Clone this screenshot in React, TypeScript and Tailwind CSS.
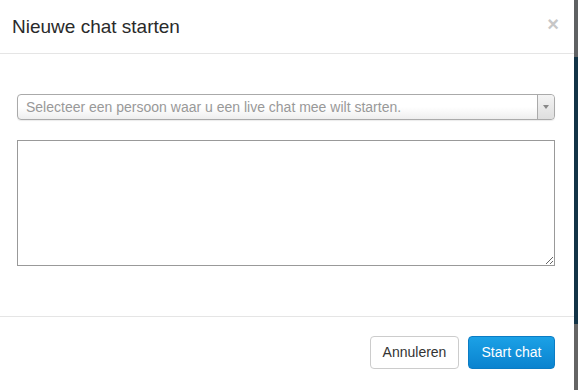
import React from "react";

export default function App() {
  return (
    <div
      className="w-[578px] h-[390px] flex bg-white overflow-hidden"
      style={{ fontFamily: '"Liberation Sans", Arial, sans-serif' }}
    >
      <div className="w-[574px] h-full flex flex-col bg-white">
        {/* Header */}
        <div className="h-[54px] border-b border-[#e5e5e5] flex items-center justify-between pl-[12px] pr-[15px]">
          <h4 className="text-[19px] leading-none text-[#2a2a2a] pb-[1px]">Nieuwe chat starten</h4>
          <span className="text-[#c7c7c7] text-[20px] font-bold leading-none pb-[6px]">×</span>
        </div>
        {/* Body */}
        <div className="flex-1 flex flex-col pt-[40px] pl-[17px] pr-[19px]">
          <div className="h-[26px] flex rounded-[4px] border border-[#aaa] bg-gradient-to-b from-white from-50% to-[#eee] shadow-[0_1px_1px_rgba(0,0,0,0.08)]">
            <div className="flex-1 flex items-center pl-[8px] text-[14px] text-[#999] leading-none">
              Selecteer een persoon waar u een live chat mee wilt starten.
            </div>
            <div className="w-[17px] border-l border-[#aaa] rounded-r-[4px] bg-gradient-to-b from-[#f4f4f4] to-[#dedede] flex items-center justify-center">
              <svg width="6" height="4" viewBox="0 0 6 4">
                <path d="M0 0 L6 0 L3 4 Z" fill="#888" />
              </svg>
            </div>
          </div>
          <textarea className="mt-[20px] h-[126px] w-full border border-[#999] bg-white outline-none" />
        </div>
        {/* Footer */}
        <div className="h-[74px] border-t border-[#e5e5e5] flex justify-end items-start gap-[9px] pt-[19px] pr-[19px]">
          <button className="h-[33px] w-[89px] rounded-[4px] border border-[#ccc] bg-white text-[14px] text-[#333]">
            Annuleren
          </button>
          <button className="h-[33px] w-[87px] rounded-[4px] border border-[#0b7cc4] bg-gradient-to-b from-[#1ba1e6] to-[#0a83cf] text-[14px] text-white">
            Start chat
          </button>
        </div>
      </div>
      {/* Right backdrop strip */}
      <div className="w-[4px] h-full flex flex-col">
        <div className="h-[57px] bg-[#5f6163]" />
        <div className="flex-1 bg-[#123447]" />
        <div className="h-[66px] bg-[#646464]" />
      </div>
    </div>
  );
}
